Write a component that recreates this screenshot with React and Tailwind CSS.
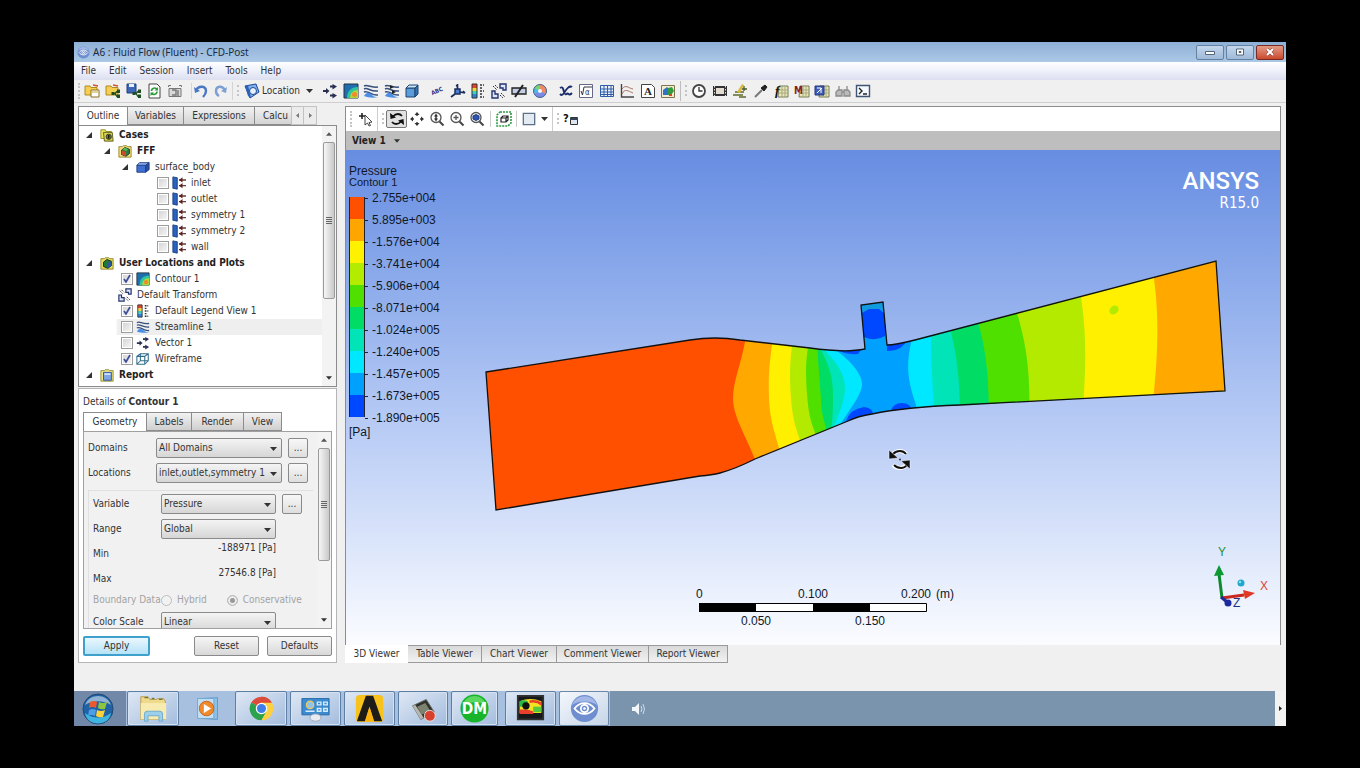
import { useState } from 'react';

/* ---------- small shared pieces ---------- */

function Svg({ children, className = 'size-4', box = '0 0 16 16' }) {
  return (
    <svg viewBox={box} className={`${className} shrink-0`} fill="none" aria-hidden="true">
      {children}
    </svg>
  );
}

const Caret = ({ className = 'w-[7px] h-1' }) => (
  <Svg box="0 0 7 4" className={className}>
    <path d="M0 0h7L3.500 4z" fill="#333" />
  </Svg>
);

const Grip = () => (
  <span className="h-4 w-0.5 border-l-2 border-dotted border-[#c4c4c8]"></span>
);

/* ---------- toolbar icons ---------- */

const folder = <path d="M1 3h5l1 1.500h6V12H1z" fill="#f5cf52" stroke="#b08a20" />;
const share = (
  <>
    <path d="M7 10.500h3l2-2h1M10 10.500l2 3h1" stroke="#1e4d22" strokeWidth="1.300" />
    <path d="M12 6.500h3v3.500h-3zM12 11.500h3V15h-3zM6.500 9h3v3h-3z" fill="#1e4d22" />
  </>
);
const sheet = (
  <>
    <path d="M6 3h9v11H5z" fill="#e9e7b8" stroke="#777a55" />
    <path d="M6 7h9M6 10h9M9 4v10M12 4v10" stroke="#a6a880" />
  </>
);
const lens = (
  <>
    <circle cx="7" cy="6.500" r="5" fill="#fff" stroke="#555" strokeWidth="1.300" />
    <path d="M10.500 10.500l4 4" stroke="#444" strokeWidth="2" />
  </>
);
const waves = (
  <>
    <path d="M1 3c4-2 5 2 14 1M1 6c4-2 6 3 14 2M1 9c5-2 7 4 14 3" stroke="#36507c" strokeWidth="1.500" />
    <path d="M1 13c3-5 6-3 8-1s4 2 6 2c-4 1-9 1-14-1z" fill="#4b8ee6" />
  </>
);
const legendIcon = (
  <>
    <path d="M2 1h5v4H2z" fill="#e8432a" />
    <path d="M2 5h5v3H2z" fill="#f0d43c" />
    <path d="M2 8h5v3H2z" fill="#3fd0c0" />
    <path d="M2 11h5v4H2z" fill="#2b86d8" />
    <path d="M2 1h5v14H2z" stroke="#333" />
    <path d="M10 2h4M10 5h3M10 8h4M10 11h3M10 14h4" stroke="#333" strokeWidth="1.500" strokeDasharray="2 1" />
  </>
);
const contourIcon = (
  <>
    <path d="M1 1h14v14H1z" fill="#1f6fae" stroke="#234" />
    <path d="M4 15C4 8 8 4 15 4v11z" fill="#2fc3a0" />
    <path d="M7 15c0-5 3-8 8-8v8z" fill="#a9dc3a" />
    <circle cx="11.500" cy="11.500" r="2.500" fill="#f08a2c" />
  </>
);
const transformIcon = (
  <>
    <path d="M9 1h6v6h-3V5H9zM1 8h3v3h3v4H1z" fill="#dfe6fb" stroke="#26356e" strokeWidth="1.400" />
    <path d="M2 3l4 4M10 10l4 4M4 2l3 3M9 12l3 3" stroke="#333" strokeDasharray="2 1" />
  </>
);
const vectorIcon = (
  <>
    <path d="M1 8h4M8 3.500h3M8 12.500h3" stroke="#2a2f52" strokeWidth="2" />
    <path d="M4 5l3.500 3L4 11zM10.500 1l4.500 2.500L10.500 6.500zM10.500 10l4.500 2.500-4.500 3z" fill="#2a2f52" />
  </>
);
const cubeIcon = (
  <>
    <path d="M2 5h9v9H2z" fill="#5b9ddb" stroke="#1f446e" />
    <path d="M2 5l3-3h9l-3 3z" fill="#c7e2f8" stroke="#1f446e" />
    <path d="M14 2v9l-3 3V5z" fill="#3572ad" stroke="#1f446e" />
  </>
);
const wireIcon = (
  <path d="M1 5h9v9H1zM5 2h9v8H5zM1 5l4-3M10 5l4-3M10 14l4-4M1 14l4-4" stroke="#2f6d8c" strokeWidth="1.200" />
);
const rotateIcon = (
  <>
    <path d="M4 5.500C7 2 11 2.500 13 5M12 10.500C9 14 5 13.500 3 11" stroke="#111" strokeWidth="1.800" />
    <path d="M1 2l.5 6L7 6.500zM15 14l-.5-6L9 9.500z" fill="#111" />
  </>
);

const fileIcons = {
  'Load results': <>{folder}<path d="M7 7h8v7H7z" fill="#fff" stroke="#8a7020" /><path d="M9 2l5 1" stroke="#d0532b" strokeWidth="1.500" /><path d="M8 9h6" stroke="#c9a437" /></>,
  'Load state': <>{folder}{share}<path d="M8 2l5 1" stroke="#d0532b" strokeWidth="1.500" /></>,
  'Save state': <><path d="M1 1h9v9H1z" fill="#3d66b8" stroke="#243f7a" /><path d="M3 1h5v3H3z" fill="#e8eefb" />{share}</>,
  Refresh: <><path d="M3 1h8l3 3v11H3z" fill="#fff" stroke="#444" /><path d="M5.500 8c0-3 4-4 5.500-1.500M11 8.500c0 3-4 4-5.500 1.500" stroke="#2c9a3a" strokeWidth="1.600" /><path d="M12 4v3.500H8.500zM4.500 13V9.500H8z" fill="#2c9a3a" /></>,
  Snapshot: <><path d="M1.500 4V2.500H4M12 2.500h2.500V4M2 5.500h12v8H2z" fill="#d9d9d9" stroke="#777" /><path d="M5 7h4v5H5M11 7v6" stroke="#777" strokeWidth="1.400" /></>,
};

const undoIcons = {
  Undo: <><path d="M3 7c3-5 10-4 10 1 0 2-1 4-3 6" stroke="#4a77c4" strokeWidth="2.400" /><path d="M1 4l1 6 5-2z" fill="#4a77c4" /></>,
  Redo: <><path d="M13 7C10 2 4 3 4 8c0 2 1 4 3 5" stroke="#7c9fd4" strokeWidth="2.400" /><path d="M15 4l-1 6-5-2z" fill="#7c9fd4" /></>,
};

const plotIcons = {
  Vector: vectorIcon,
  Contour: contourIcon,
  Streamline: waves,
  'Particle track': <>{waves}<path d="M6 2l4 2-4 2zM8 7l4 2-4 2z" fill="#222" /></>,
  Volume: cubeIcon,
};

const insertIcons = {
  Text: <text x="8" y="10" fontSize="6" fontWeight="700" textAnchor="middle" fill="#2c2f86" transform="rotate(-24 8 8)">ABC</text>,
  'Coordinate frame': <><path d="M5 6h5v5H5z" fill="#4a7fd0" stroke="#1d2c5c" strokeWidth="1.500" /><path d="M7.500 6V1M10 9l5 1M5 11l-4 3M8 2l-2 1M13 8l2 2" stroke="#1d2c5c" strokeWidth="1.700" /></>,
  Legend: legendIcon,
  Transform: transformIcon,
  'Clip plane': <><path d="M1 5h14v6H1z" fill="#c3cde6" stroke="#222" strokeWidth="1.300" /><path d="M4 14L12 2" stroke="#222" strokeWidth="2" /></>,
  'Color map': <><circle cx="8" cy="8" r="6.500" fill="#4cb9e8" /><path d="M8 8V1.500A6.500 6.500 0 0 1 13.600 11z" fill="#ef8a62" /><path d="M8 8l5.600 3.200A6.500 6.500 0 0 1 2.400 11z" fill="#7a8ae6" /><path d="M8 8V1.500A6.500 6.500 0 0 0 2.400 5z" fill="#74d672" /><circle cx="8" cy="8" r="2" fill="#f3f6fb" /><circle cx="8" cy="8" r="6.500" stroke="#49618a" /></>,
};

const calcIcons = {
  Variable: <path d="M2 5c3-2 3 1 4 4s2 3 4 1M13 4C10 3 8 7 6 10s-3 2-4 1M10 5c1-2 3-2 4-1M10 10c1 3 3 1 4 0" stroke="#1d2f6b" strokeWidth="1.900" />,
  Expression: <><path d="M1.500 1.500h13v13h-13z" fill="#fff" stroke="#668" /><path d="M3 8l1.500 4L6 4h8" stroke="#334" /><text x="7" y="12" fontSize="8" fill="#334">α</text></>,
  Table: <><path d="M1.500 2.500h13v11h-13z" fill="#e9f0fb" stroke="#2e5ca8" /><path d="M1 6h14M1 9h14M1 11.500h14M5 2v12M8.500 2v12M12 2v12" stroke="#2e5ca8" /></>,
  Chart: <><path d="M2.500 1v13H15" stroke="#444" strokeWidth="1.400" /><path d="M3 6c4-5 6-1 11 0M3 11c3-6 6-3 11-1" stroke="#a87360" /></>,
  Comment: <><path d="M1.500 1.500h10l3 3v10h-13z" fill="#fff" stroke="#444" /><text x="8" y="12" fontSize="11" fontWeight="700" textAnchor="middle" fill="#222" className="font-['Liberation_Serif',serif]">A</text></>,
  Figure: <><path d="M1.500 2.500h13v12h-13z" fill="#f4ecd0" stroke="#7b744c" /><path d="M3 7l4-3 2 2v6H3z" fill="#2f73c9" /><path d="M8 5l4-1 2 4-3 4H8z" fill="#2f9d3c" /><path d="M9 11h3v2H9z" fill="#d04a2a" /></>,
};

const toolIcons = {
  Timestep: <><circle cx="8" cy="8" r="6" fill="#fff" stroke="#444" strokeWidth="1.800" /><path d="M8 4v4h3.500" stroke="#333" strokeWidth="1.300" /></>,
  Animation: <><path d="M1 3h14v10H1z" fill="#333" /><path d="M4 5h8v6H4z" fill="#e2ddd0" /><path d="M2.500 3v10M13.500 3v10" stroke="#ddd" strokeDasharray="1.500 1.500" /></>,
  'Quick editor': <><path d="M1 12h10M3 9h9M7 14h7" stroke="#5d6b2f" strokeWidth="1.500" /><path d="M5 9l5-8 2 1-4 8z" fill="#d8b83e" /><path d="M10 6h5M12 3v5" stroke="#4c5a2a" strokeWidth="1.300" /></>,
  Probe: <><path d="M2 14l7-7" stroke="#777" strokeWidth="2" /><path d="M8 5l3 3 3-4-2-2z" fill="#222" stroke="#222" /></>,
  'Function calculator': <>{sheet}<text x="2" y="12" fontSize="13" fontWeight="700" fontStyle="italic" fill="#111" className="font-['Liberation_Serif',serif]">f</text></>,
  'Macro calculator': <>{sheet}<text x="0" y="11" fontSize="10" fontWeight="700" fill="#8a1f22">M</text></>,
  'Mesh calculator': <>{sheet}<path d="M1 3h9v9H1z" fill="#3f5fb8" stroke="#22367a" /><path d="M3 10l5-5M3 5h4v5" stroke="#fff" /></>,
  'Case comparison': <path d="M3 7h4v6H1V9zM9 7h4l2 2v4H9zM4 3v4M12 3v4M7 9h2" fill="#bbb" stroke="#8b8b8b" strokeWidth="1.300" />,
  'Command editor': <><path d="M1.500 2.500h13v11h-13z" fill="#f5f8fc" stroke="#3f5570" strokeWidth="1.400" /><path d="M4 5l3 3-3 3M8 11h4" stroke="#222" strokeWidth="1.400" /></>,
};

function IconGroup({ icons, className }) {
  return (
    <div className={`flex items-center justify-between ${className}`}>
      {Object.entries(icons).map(([name, art]) => (
        <button key={name} aria-label={name} title={name}>
          <Svg>{art}</Svg>
        </button>
      ))}
    </div>
  );
}

/* ---------- window chrome ---------- */

function EyeLogo({ className }) {
  return (
    <Svg box="0 0 32 32" className={className}>
      <circle cx="16" cy="16" r="15" fill="#6e8ed0" />
      <path d="M2 12a15 15 0 0 1 28 0c-8-5-20-5-28 0z" fill="#a3b8e6" />
      <path d="M5 16c6-8 16-8 22 0-6 8-16 8-22 0z" stroke="#fff" strokeWidth="2" />
      <circle cx="16" cy="16" r="4" stroke="#fff" strokeWidth="2" />
      <circle cx="16" cy="16" r="1.500" fill="#fff" />
    </Svg>
  );
}

function TitleBar() {
  return (
    <header className="flex h-5 items-center bg-linear-to-b from-[#8fb0d6] to-[#abc8e6] pl-[3px] pr-0.5">
      <EyeLogo className="size-[13px]" />
      <h1 className="ml-[3px] flex-1 font-['Noto_Sans',sans-serif] text-[10px] text-[#1b2b40]">A6 : Fluid Flow (Fluent) - CFD-Post</h1>
      <div className="flex gap-0.5">
        <button aria-label="Minimize" className="flex h-[15px] w-7 items-center justify-center rounded-xs border border-[#6580a0] bg-linear-to-b from-[#c3d6ec] to-[#9fbad8]">
          <Svg box="0 0 12 8" className="h-2 w-3"><path d="M1.500 3.500h9v3h-9z" fill="#fff" stroke="#55657a" /></Svg>
        </button>
        <button aria-label="Maximize" className="flex h-[15px] w-7 items-center justify-center rounded-xs border border-[#6580a0] bg-linear-to-b from-[#c3d6ec] to-[#9fbad8]">
          <Svg box="0 0 12 8" className="h-2 w-3"><path d="M2.500 1h7v6h-7z" fill="#fff" stroke="#55657a" /><path d="M5 3.500h2v1H5z" stroke="#55657a" /></Svg>
        </button>
        <button aria-label="Close" className="flex h-[15px] w-7 items-center justify-center rounded-xs border border-[#7a2a20] bg-linear-to-b from-[#e39a85] to-[#c9482c]">
          <Svg box="0 0 12 8" className="h-2 w-3"><path d="M3 1l6 6M9 1L3 7" stroke="#733" strokeWidth="3" /><path d="M3 1l6 6M9 1L3 7" stroke="#fff" strokeWidth="2" /></Svg>
        </button>
      </div>
    </header>
  );
}

function MenuBar() {
  return (
    <nav className="flex h-[18px] items-center gap-[13px] bg-linear-to-b from-white via-[#eef0fa] to-[#dcdff0] pl-[7px]">
      {['File', 'Edit', 'Session', 'Insert', 'Tools', 'Help'].map((item) => (
        <button key={item}>{item}</button>
      ))}
    </nav>
  );
}

function Toolbar() {
  return (
    <div className="flex h-[23px] items-center border-b border-[#cfcfd2] pl-1">
      <Grip />
      <IconGroup icons={fileIcons} className="ml-1 w-[99px]" />
      <IconGroup icons={undoIcons} className="ml-2 w-[37px] border-l border-[#d4d4d8] pl-px" />
      <span className="ml-1 h-[18px] border-l border-[#d4d4d8]"></span>
      <span className="ml-1"><Grip /></span>
      <button className="ml-[5px] flex items-center gap-0.5">
        <Svg>
          <path d="M1 3l11-2 3 8-9 6z" fill="#7fb2ee" stroke="#1c4694" />
          <path d="M1 3l3-1 3 13-3-2z" fill="#2b62b6" />
          <circle cx="9" cy="8" r="3.500" fill="#e7f1fd" stroke="#1c4694" />
        </Svg>
        Location
        <Caret className="ml-1 h-1 w-[7px]" />
      </button>
      <IconGroup icons={plotIcons} className="ml-[9px] w-[98px]" />
      <IconGroup icons={insertIcons} className="ml-[9px] w-[119px]" />
      <IconGroup icons={calcIcons} className="ml-[10px] w-[118px]" />
      <span className="ml-1 h-5 border-l border-[#bdbdc0]"></span>
      <span className="ml-1"><Grip /></span>
      <IconGroup icons={toolIcons} className="ml-1 w-[180px]" />
    </div>
  );
}

/* ---------- outline tree ---------- */

const arrowPlate = (
  <>
    <path d="M1 1l5 1v13l-5-1z" fill="#2a62c0" stroke="#173a7c" />
    <path d="M8 4.500h8M8 11h8" stroke="#6b3a3a" strokeWidth="1.600" />
    <path d="M8 4.500l4-3v6zM8 11l4-3v6z" fill="#5a2222" />
  </>
);
const casesIcon = (
  <>
    <path d="M1 2h5l1 2h6v8H1z" fill="#eee45a" stroke="#8f8a1e" />
    <path d="M4 5h10l1 10H5z" fill="#d8d44c" stroke="#55551a" />
    <circle cx="10" cy="10" r="3" fill="#6b7a20" stroke="#333" />
    <path d="M10 8v4" stroke="#111" strokeWidth="1.500" />
  </>
);
const fffIcon = (
  <>
    <path d="M1 3h4l1-1h4l1 1h4v12H1z" fill="#f1e07a" stroke="#95802b" />
    <path d="M4 7l4-3 5 2v5l-4 3-5-2z" fill="#2e7d3a" stroke="#223" />
    <path d="M4 7l5 2v5l-5-2z" fill="#cc4a30" />
    <path d="M5 6l3-2 4 2-3 2z" fill="#53b555" />
  </>
);
const plotsIcon = (
  <>
    <path d="M1 3h4l1-1h4l1 1h4v12H1z" fill="#e8dc5c" stroke="#8b852a" />
    <path d="M4 7l4-3 5 2v5l-4 3-5-2z" fill="#1f7a34" stroke="#122" />
    <path d="M9 8l4-2v5l-4 3z" fill="#2b55a0" />
  </>
);
const reportIcon = (
  <>
    <path d="M1 3h4l1-1h4l1 1h4v12H1z" fill="#efe98a" stroke="#8b852a" />
    <path d="M4 5h9v9H4z" fill="#7ea6e6" stroke="#2a4c96" />
    <path d="M5 6h7v2H5z" fill="#d2e1fa" />
  </>
);
const bodyIcon = (
  <>
    <path d="M1 6h10v8H1z" fill="#3f6fd0" stroke="#1f3c86" />
    <path d="M1 6l3-3h11l-4 3z" fill="#8db0f0" stroke="#1f3c86" />
    <path d="M15 3v8l-4 3V6z" fill="#274f9f" stroke="#1f3c86" />
  </>
);

const tree = [
  { label: 'Cases', icon: casesIcon, pad: 'pl-[7px]', open: true, bold: true },
  { label: 'FFF', icon: fffIcon, pad: 'pl-[25px]', open: true, bold: true },
  { label: 'surface_body', icon: bodyIcon, pad: 'pl-[43px]', open: true },
  { label: 'inlet', icon: arrowPlate, pad: 'pl-[78px]', check: 'off' },
  { label: 'outlet', icon: arrowPlate, pad: 'pl-[78px]', check: 'off' },
  { label: 'symmetry 1', icon: arrowPlate, pad: 'pl-[78px]', check: 'off' },
  { label: 'symmetry 2', icon: arrowPlate, pad: 'pl-[78px]', check: 'off' },
  { label: 'wall', icon: arrowPlate, pad: 'pl-[78px]', check: 'off' },
  { label: 'User Locations and Plots', icon: plotsIcon, pad: 'pl-[7px]', open: true, bold: true },
  { label: 'Contour 1', icon: contourIcon, pad: 'pl-[42px]', check: 'on' },
  { label: 'Default Transform', icon: transformIcon, pad: 'pl-[39px]' },
  { label: 'Default Legend View 1', icon: legendIcon, pad: 'pl-[42px]', check: 'on' },
  { label: 'Streamline 1', icon: waves, pad: 'pl-[42px]', check: 'off', active: true },
  { label: 'Vector 1', icon: vectorIcon, pad: 'pl-[42px]', check: 'off' },
  { label: 'Wireframe', icon: wireIcon, pad: 'pl-[42px]', check: 'on' },
  { label: 'Report', icon: reportIcon, pad: 'pl-[7px]', open: true, bold: true },
];

function TreeRow({ row }) {
  const Row = row.check ? 'label' : 'div';
  return (
    <li className={row.active ? 'bg-linear-to-r from-white from-15% to-[#efefef] to-16%' : ''}>
      <Row className={`flex h-4 items-center ${row.pad}`}>
        {row.open && (
          <button aria-label={`Collapse ${row.label}`} className="mr-2">
            <Svg box="0 0 6 6" className="size-[6px]"><path d="M6 0v6H0z" fill="#333" /></Svg>
          </button>
        )}
        {row.check && (
          <span className="relative mr-[3px] flex">
            <input
              type="checkbox"
              defaultChecked={row.check === 'on'}
              className="peer size-3 appearance-none border border-[#9c9c9c] bg-linear-to-br from-[#d2d2d2] to-[#f8f8f8] shadow-[inset_0_0_0_1px_#fff]"
            />
            <svg viewBox="0 0 12 12" className="pointer-events-none absolute inset-0 hidden size-3 peer-checked:block" fill="none">
              <path d="M3 6l2 3 4-7" stroke="#3f4f96" strokeWidth="1.700" />
            </svg>
          </span>
        )}
        <Svg className="size-[14px]">{row.icon}</Svg>
        <span className={`ml-[5px] whitespace-nowrap ${row.bold ? 'font-bold text-[#222]' : ''}`}>{row.label}</span>
      </Row>
    </li>
  );
}

function ScrollBar({ thumb }) {
  return (
    <div className="flex w-[14px] shrink-0 flex-col items-center bg-[#f3f3f3]">
      <button aria-label="Scroll up" className="flex h-4 w-full items-center justify-center">
        <Svg box="0 0 7 4" className="h-1 w-[6px]"><path d="M0 4h7L3.500 0z" fill="#555" /></Svg>
      </button>
      <div className={`flex w-3 flex-col items-center justify-center gap-px rounded-xs border border-[#9a9a9a] bg-linear-to-r from-[#f6f6f6] to-[#c9c9cb] ${thumb}`}>
        <span className="h-px w-1.5 bg-[#666]"></span>
        <span className="h-px w-1.5 bg-[#666]"></span>
        <span className="h-px w-1.5 bg-[#666]"></span>
        <span className="h-px w-1.5 bg-[#666]"></span>
      </div>
      <button aria-label="Scroll down" className="mt-auto flex h-4 w-full items-center justify-center">
        <Caret className="h-1 w-[6px]" />
      </button>
    </div>
  );
}

function Outline() {
  return (
    <section className="shrink-0">
      <div className="flex h-[19px] items-stretch">
        <button className="w-[50px] border border-b-0 border-[#8c8c8c] bg-white">Outline</button>
        <button className="w-14 border border-l-0 border-[#8c8c8c] bg-linear-to-b from-[#f2f2f2] to-[#d4d4d4]">Variables</button>
        <button className="w-[71px] border border-l-0 border-[#8c8c8c] bg-linear-to-b from-[#f2f2f2] to-[#d4d4d4]">Expressions</button>
        <button className="w-[36px] overflow-hidden border border-x-0 border-[#8c8c8c] bg-linear-to-b from-[#f2f2f2] to-[#d4d4d4] pl-2 text-left">Calcu</button>
        <button aria-label="Previous tabs" className="flex w-[13px] items-center justify-center border border-[#c2c2c2] bg-[#ececec]">
          <Svg box="0 0 3 5" className="h-[5px] w-[3px]"><path d="M3 0v5L0 2.500z" fill="#777" /></Svg>
        </button>
        <button aria-label="Next tabs" className="flex w-[13px] items-center justify-center border border-l-0 border-[#c2c2c2] bg-[#ececec]">
          <Svg box="0 0 3 5" className="h-[5px] w-[3px]"><path d="M0 0v5L3 2.500z" fill="#777" /></Svg>
        </button>
      </div>
      <div className="flex h-[262px] border border-[#8c8c8c] bg-white">
        <ul className="flex-1 overflow-hidden pt-px">
          {tree.map((row) => (
            <TreeRow key={row.label} row={row} />
          ))}
        </ul>
        <ScrollBar thumb="h-[157px]" />
      </div>
    </section>
  );
}

/* ---------- details editor ---------- */

function Combo({ id, value, width, more }) {
  return (
    <>
      <span className={`relative ${width}`}>
        <select
          id={id}
          className="h-5 w-full appearance-none overflow-hidden rounded-xs border border-[#8a8a8a] bg-linear-to-b from-[#f4f4f4] to-[#d6d6d6] pl-[2px] pr-[16px]"
        >
          <option>{value}</option>
        </select>
        <span className="pointer-events-none absolute right-[5px] top-[9px]"><Caret /></span>
      </span>
      {more && (
        <button aria-label={`Edit ${id}`} className="ml-[6px] h-5 w-5 rounded-xs border border-[#8a8a8a] bg-linear-to-b from-[#f8f8f8] to-[#dedede]">
          ...
        </button>
      )}
    </>
  );
}

function Details() {
  const [mode, setMode] = useState('Conservative');

  return (
    <section className="flex flex-1 flex-col border border-[#b5b5b8] bg-white px-1 pb-[6px]">
      <h2 className="mt-[3px] flex h-5 items-center">
        <span>Details of <b>Contour 1</b></span>
      </h2>
      <div className="flex h-[19px]">
        <button className="w-16 border border-b-0 border-[#8c8c8c] bg-white">Geometry</button>
        {['Labels', 'Render', 'View'].map((tab, i) => (
          <button
            key={tab}
            className={`border border-l-0 border-[#8c8c8c] bg-linear-to-b from-[#f2f2f2] to-[#cfcfcf] ${['w-[45px]', 'w-[52px]', 'w-[38px]'][i]}`}
          >
            {tab}
          </button>
        ))}
      </div>
      <div className="flex h-[198px] border border-[#a0a0a0] bg-[#f1f1f2]">
        <form className="flex-1 overflow-hidden pl-[4px] pt-[3px]">
          <div className="flex h-[25px] items-center">
            <label htmlFor="Domains" className="w-[68px]">Domains</label>
            <Combo id="Domains" value="All Domains" width="w-[126px]" more />
          </div>
          <div className="flex h-[25px] items-center">
            <label htmlFor="Locations" className="w-[68px]">Locations</label>
            <Combo id="Locations" value="inlet,outlet,symmetry 1,symmetry 2,wall" width="w-[126px]" more />
          </div>
          <div className="mr-1 mt-[5px] border-l border-t border-[#e0e0e3] pl-1">
            <div className="flex h-[25px] items-center">
              <label htmlFor="Variable" className="w-[68px]">Variable</label>
              <Combo id="Variable" value="Pressure" width="w-[115px]" more />
            </div>
            <div className="flex h-[25px] items-center">
              <label htmlFor="Range" className="w-[68px]">Range</label>
              <Combo id="Range" value="Global" width="w-[115px]" />
            </div>
            <div className="flex h-[25px] w-[183px] justify-between pt-px">
              <span className="self-center">Min</span>
              <span>-188971 [Pa]</span>
            </div>
            <div className="flex h-[25px] w-[183px] justify-between pt-px">
              <span className="self-center">Max</span>
              <span>27546.8 [Pa]</span>
            </div>
            <fieldset className="flex h-[18px] items-center whitespace-nowrap text-[#a3a3a3]">
              <span className="w-[68px]">Boundary Data</span>
              {['Hybrid', 'Conservative'].map((name) => (
                <label key={name} className="mr-5 flex items-center gap-[5px] last:mr-0">
                  <input
                    type="radio"
                    name="boundary"
                    checked={mode === name}
                    onChange={() => setMode(name)}
                    className="size-[11px] appearance-none rounded-full border border-[#bdbdbd] bg-[#f2f2f2] checked:bg-[#999] checked:shadow-[inset_0_0_0_2px_#eee]"
                  />
                  {name}
                </label>
              ))}
            </fieldset>
            <div className="flex h-[25px] items-center">
              <label htmlFor="ColorScale" className="w-[68px]">Color Scale</label>
              <Combo id="ColorScale" value="Linear" width="w-[115px]" />
            </div>
          </div>
        </form>
        <ScrollBar thumb="h-[113px]" />
      </div>
      <div className="mt-auto flex justify-between">
        <button className="h-5 w-[67px] rounded-xs border-2 border-[#3fa0cc] bg-linear-to-b from-[#eaf7fe] to-[#b5e2f7]">Apply</button>
        <div className="flex gap-2">
          <button className="h-5 w-[65px] rounded-xs border border-[#8a8a8a] bg-linear-to-b from-[#f6f6f6] to-[#d8d8d8]">Reset</button>
          <button className="h-5 w-[65px] rounded-xs border border-[#8a8a8a] bg-linear-to-b from-[#f6f6f6] to-[#d8d8d8]">Defaults</button>
        </div>
      </div>
    </section>
  );
}

/* ---------- viewer ---------- */

const legend = [
  ['2.755e+004', 'bg-[#ff5000]'],
  ['5.895e+003', 'bg-[#ffa500]'],
  ['-1.576e+004', 'bg-[#fff200]'],
  ['-3.741e+004', 'bg-[#b4ec00]'],
  ['-5.906e+004', 'bg-[#50e000]'],
  ['-8.071e+004', 'bg-[#00dc64]'],
  ['-1.024e+005', 'bg-[#00e4b8]'],
  ['-1.240e+005', 'bg-[#00e8ff]'],
  ['-1.457e+005', 'bg-[#00a0ff]'],
  ['-1.673e+005', 'bg-[#0048ff]'],
  ['-1.890e+005', ''],
];

function Legend() {
  return (
    <div className="relative pl-[3px] pt-[15px] text-xs leading-[12px] text-[#101828]">
      <p>Pressure</p>
      <p className="text-[11px] leading-[10px]">Contour 1</p>
      <div className="flex">
        <div className="mt-[10px] w-4">
          <div className="border-x border-[#223]">
            {legend.slice(0, 10).map(([value, color]) => (
              <div key={value} className={`h-[22px] ${color}`}></div>
            ))}
          </div>
          <p className="mt-[9px]">[Pa]</p>
        </div>
        <ul>
          {legend.map(([value]) => (
            <li key={value} className="flex h-[22px] items-center">
              <span className="mr-1 h-px w-[3px] bg-[#223]"></span>
              {value}
            </li>
          ))}
        </ul>
      </div>
    </div>
  );
}

const outlinePath =
  'M486 372L690 340Q715 336 740 340L810 348Q845 353 865 349L861 305 883 302 887 345Q895 345 915 340L1216 261 1225 391 960 405Q905 407 872 414 858 416 848 421L755 459Q735 469 720 473 712 475 700 476L496 510Z';

// every band covers all that lies right of its left edge
const bands = [
  ['#ffa800', 'M747 330C743 360 733 380 733 398S745 434 757 464H1300V200Z'],
  ['#fff000', 'M774 330C770 360 768 372 769 398S776 434 782 460H1300V200Z'],
  ['#b4ea00', 'M794 330C790 360 789 372 791 398S797 430 803 450H1300V200Z'],
  ['#50e000', 'M811 330C806 356 805 368 807 394S812 424 818 440H1300V200Z'],
  ['#00dc64', 'M817 340C818 365 820 380 821 400S825 420 829 440H1300V200Z'],
  ['#00e4b8', 'M818 345C830 365 833 378 833 396S832 420 831 440H1300V200Z'],
  ['#00e8ff', 'M820 346C836 360 845 374 845 388S838 415 829 440H1300V200Z'],
  ['#00a0ff', 'M832 348C850 359 862 374 862 384S852 406 840 425L870 440H1300V200H850Z'],
  ['#00e8ff', 'M914 330C909 350 906 365 910 384S917 402 919 420H1300V200Z'],
  ['#00e4b8', 'M931 330C931 360 932 380 935 420H1300V200Z'],
  ['#00dc64', 'M948 320C956 350 960 375 960 420H1300V200Z'],
  ['#50e000', 'M976 315C985 345 989 370 989 420H1300V200Z'],
  ['#b4ea00', 'M1013 300C1026 340 1031 370 1029 420H1300V200Z'],
  ['#fff000', 'M1078 280C1088 330 1086 370 1082 420H1300V200Z'],
  ['#ffa800', 'M1151 260C1160 310 1159 350 1151 420H1300V200Z'],
];

function Contour() {
  return (
    <svg viewBox="346 150 934 495" className="absolute inset-0 h-full w-full" role="img" aria-label="Pressure contour">
      <clipPath id="domain">
        <path d={outlinePath} />
      </clipPath>
      <g clipPath="url(#domain)">
        <path d="M480 250h800v270H480z" fill="#ff5000" />
        {bands.map(([fill, d], i) => (
          <path key={i} d={d} fill={fill} />
        ))}
        <path d="M858 298h27l3 45-23 5z" fill="#00a0ff" />
        <path d="M860 300h24l1 11-23 2z" fill="#129ade" />
        <path d="M862 313l7-4 10 0 6 5v22q-10 6-21 1z" fill="#0048ff" />
        <path d="M836 349q8 6 22 5l5-7zM887 342v9q14 1 21-12zM846 421q4-12 18-14 10 1 9 9zM891 411q2-8 11-8 8 0 10 7z" fill="#0048ff" />
        <ellipse cx="1114" cy="310" rx="5" ry="4" fill="#b4ea00" transform="rotate(-40 1114 310)" />
      </g>
      <path d={outlinePath} fill="none" stroke="#111" strokeWidth="1.300" />
      {/* rotate cursor */}
      <g fill="none" stroke="#fff" strokeWidth="4">
        <path d="M893 454c4-4 10-4 13 0M906 465c-3 4-9 4-13 0" />
      </g>
      <path d="M893 454c4-4 10-4 13 0M907 465c-3 4-9 4-13 0" fill="none" stroke="#111" strokeWidth="2" />
      <path d="M889 450v9l9-1zM910 469v-9l-9 1z" fill="#111" stroke="#fff" strokeWidth=".5" />
      <circle cx="900" cy="459.500" r="1" fill="#334" />
    </svg>
  );
}

function Ruler() {
  return (
    <svg viewBox="0 0 270 44" className="absolute bottom-[15px] left-[37.500%] h-11 w-[270px] font-['Liberation_Sans',Arial,sans-serif] text-xs" fill="#101828">
      <text x="0" y="12">0</text>
      <text x="117" y="12" textAnchor="middle">0.100</text>
      <text x="205" y="12">0.200</text>
      <text x="240" y="12">(m)</text>
      <path d="M3.500 17.500h227v8h-227z" fill="#fff" stroke="#000" />
      <path d="M3 17h57v9H3zM117 17h57v9h-57z" fill="#000" />
      <text x="60" y="39" textAnchor="middle">0.050</text>
      <text x="174" y="39" textAnchor="middle">0.150</text>
    </svg>
  );
}

function Triad() {
  return (
    <svg viewBox="0 -6 60 72" className="absolute bottom-[31px] right-2 h-[72px] w-[60px] font-['Liberation_Sans',Arial,sans-serif] text-xs">
      <path d="M10 50L7 26" stroke="#0c8a2c" strokeWidth="3" />
      <path d="M2 28l5-11 5 10z" fill="#0c9a30" />
      <path d="M10 50l22-3" stroke="#c8281e" strokeWidth="3" />
      <path d="M31 42l12 3-10 6z" fill="#e03a26" />
      <path d="M9 49l6 5" stroke="#1f2c9c" strokeWidth="3" />
      <circle cx="16" cy="55" r="3.500" fill="#1b2a9e" />
      <circle cx="29" cy="35" r="3.500" fill="#21a7c8" />
      <circle cx="28" cy="34" r="1.200" fill="#8be4f2" />
      <text x="6" y="8" fill="#1c8f3c">Y</text>
      <text x="48" y="42" fill="#e0453a">X</text>
      <text x="21" y="59" fill="#23308a">Z</text>
    </svg>
  );
}

function ViewerToolbar() {
  return (
    <div className="flex h-6 items-center bg-white pl-1">
      <Grip />
      <button aria-label="Select" className="ml-[6px] flex">
        <Svg><path d="M1 5h6M4 2v6" stroke="#222" strokeWidth="1.600" /><path d="M7 4l7 7-3 .5 1.500 3-1.500.5L9.500 12 7 14z" fill="#fff" stroke="#444" /></Svg>
      </button>
      <span className="ml-[3px] h-6 border-l border-[#ccc]"></span>
      <span className="ml-1"><Grip /></span>
      <button aria-label="Rotate" className="ml-[2px] flex h-[18px] w-[21px] items-center justify-center rounded-xs border border-[#777] bg-[#e2e2e2]">
        <Svg>{rotateIcon}</Svg>
      </button>
      <div className="ml-[2px] flex w-[76px] justify-between">
        <button aria-label="Pan"><Svg><path d="M8 2v3M8 11v3M2 8h3M11 8h3" stroke="#444" strokeWidth="1.500" /><path d="M8 1l2.500 3h-5zM8 15l2.500-3h-5zM1 8l3-2.500v5zM15 8l-3-2.500v5z" fill="#333" /></Svg></button>
        <button aria-label="Zoom"><Svg>{lens}<path d="M7 2.500l2 3H5zM7 10.500l2-3H5z" fill="#333" /><path d="M7 4v5" stroke="#333" strokeWidth="1.500" /></Svg></button>
        <button aria-label="Zoom box"><Svg>{lens}<path d="M7 4v5M4.500 6.500h5" stroke="#555" strokeWidth="1.300" /></Svg></button>
        <button aria-label="Fit view"><Svg>{lens}<path d="M4 5l3-1.500L10 5v3L7 9.500 4 8z" fill="#2d55b4" stroke="#1c357a" /></Svg></button>
      </div>
      <span className="ml-[5px] h-4 border-l border-[#ccc]"></span>
      <button aria-label="Highlight" className="ml-[5px]">
        <Svg><path d="M4 1h11v11l-3 3H1V4z" stroke="#2e9a46" strokeWidth="1.600" strokeDasharray="2 1" /><path d="M5 7l2-2h5v4l-2 2H5zM5 7h5v4M10 7l2-2" stroke="#222" strokeWidth="1.200" /></Svg>
      </button>
      <span className="ml-[4px] h-4 border-l border-[#ccc]"></span>
      <button aria-label="Viewport layout" className="ml-[5px] flex items-center gap-[5px]">
        <Svg className="size-[14px]"><path d="M1.500 1.500h13v13h-13z" fill="#e4eaf2" stroke="#5d7188" strokeWidth="1.500" /></Svg>
        <Caret />
      </button>
      <span className="ml-1 h-6 border-l border-[#ccc]"></span>
      <span className="ml-1"><Grip /></span>
      <button aria-label="View help" className="ml-1 flex items-center">
        <Svg><text x="0" y="11" fontSize="11" fontWeight="700" fill="#111">?</text><path d="M7.500 6.500h7v7h-7z" fill="#dde5f0" stroke="#333" /><path d="M7 8h8" stroke="#345" strokeWidth="2" /></Svg>
      </button>
    </div>
  );
}

function Viewer() {
  const [tab, setTab] = useState('3D Viewer');
  const tabs = [
    ['3D Viewer', 'w-[63px]'],
    ['Table Viewer', 'w-[74px]'],
    ['Chart Viewer', 'w-[75px]'],
    ['Comment Viewer', 'w-[92px]'],
    ['Report Viewer', 'w-[79px]'],
  ];

  return (
    <main className="flex min-w-0 flex-1 flex-col">
      <div className="flex flex-1 flex-col border border-b-0 border-[#8c8c8c]">
        <ViewerToolbar />
        <button className="flex h-[19px] items-center gap-2 bg-[#bebebe] pl-[6px] font-bold text-[#222]">
          View 1 <Caret className="h-1 w-[6px]" />
        </button>
        <div className="relative flex-1 bg-linear-to-b from-[#678de2] to-[#fbfcff] font-['Liberation_Sans',Arial,sans-serif]">
          <Contour />
          <Legend />
          <div className="absolute right-[21px] top-[17px] text-right text-white">
            <p className="font-['Roboto',sans-serif] text-2xl font-medium leading-[28px]">ANSYS</p>
            <p className="font-['DejaVu_Sans_Condensed','DejaVu_Sans',sans-serif] text-[15px] leading-[16px]">R15.0</p>
          </div>
          <Ruler />
          <Triad />
        </div>
      </div>
      <div className="flex h-[18px]">
        {tabs.map(([name, width]) => (
          <button
            key={name}
            onClick={() => setTab(name)}
            className={`${width} ${
              tab === name
                ? 'bg-white'
                : 'border border-l-0 border-[#9a9a9a] bg-linear-to-b from-[#dadada] to-[#f2f2f2]'
            }`}
          >
            {name}
          </button>
        ))}
      </div>
    </main>
  );
}

/* ---------- taskbar ---------- */

function TaskButton({ name, className, children }) {
  return (
    <button
      aria-label={name}
      className={`flex h-full items-center justify-center rounded-xs border border-[#5f7ea3] bg-linear-to-br from-[#dfe8f5] to-[#a3bcdd] shadow-[inset_0_0_0_1px_#d5e2f2] ${className}`}
    >
      <Svg box="0 0 32 32" className="size-[29px]">{children}</Svg>
    </button>
  );
}

function Taskbar() {
  return (
    <footer className="flex h-[35px] bg-[#7b94ad]">
      <div className="flex gap-[3px] bg-[#a8c0e0] pr-px">
        <button aria-label="Start" className="flex w-[52px] items-center justify-center bg-[#7288a8] pr-1">
          <Svg box="0 0 32 32" className="size-8">
            <circle cx="16" cy="16" r="15" fill="#1f63a6" stroke="#204870" />
            <path d="M3 20c8 6 18 6 26 0-2 14-24 14-26 0z" fill="#3fb4e0" />
            <path d="M3 12C7 0 25 0 29 12c-8-5-18-5-26 0z" fill="#8eb2d4" />
            <path d="M8 9q4-2 7 0l-1 6q-4-2-7 0z" fill="#ea5a2c" />
            <path d="M17 9q4 2 8 0l-2 7q-4 1-7-1z" fill="#8cc63e" />
            <path d="M7 17q4-2 7 0l-1 6q-4-2-7 0z" fill="#4a9fe6" />
            <path d="M15 17q4 2 8 0l-2 7q-4 1-7-1z" fill="#fbd23c" />
          </Svg>
        </button>
        <TaskButton name="Explorer" className="-ml-[2px] w-[52px]">
          <path d="M2 3h8l2 3h7l2-1h6l2 3v20H2z" fill="#efd98a" stroke="#b7984a" />
          <path d="M2 10h28v18H2z" fill="#f8ebb0" />
          <path d="M6 4h4M14 5h3M22 6h4" stroke="#6b7b3c" strokeWidth="1.500" />
          <path d="M6 30V22q0-3 3-3h14q3 0 3 3v8h-4v-6H10v6z" fill="#9ccfea" stroke="#6ba8cc" />
        </TaskButton>
        <button aria-label="Media player" className="flex w-[50px] items-center justify-center">
          <Svg box="0 0 32 32" className="size-[29px]">
            <path d="M9 5l18-1v24l-18-1z" fill="#8cc2e8" stroke="#5b97c6" />
            <path d="M5 5h18v22H5z" fill="#c4dff4" stroke="#6ea5d0" />
            <circle cx="15" cy="16" r="8" fill="#f08a2a" stroke="#c2611a" />
            <path d="M12 11l8 5-8 5z" fill="#fff" />
          </Svg>
        </button>
        <TaskButton name="Chrome" className="w-[52px]">
          <path d="M16 16L4.700 9.500A13 13 0 0 1 27.300 9.500z" fill="#dd4b3a" />
          <path d="M16 16L4.700 9.500A13 13 0 0 0 16 29l5.600-10z" fill="#2ba24c" />
          <path d="M16 16l0-6.500h11.300A13 13 0 0 1 16 29l5.600-10z" fill="#fcd03f" />
          <path d="M16 3A13 13 0 0 1 27.300 9.500H16z" fill="#dd4b3a" />
          <circle cx="16" cy="16" r="6.300" fill="#fff" />
          <circle cx="16" cy="16" r="5" fill="#3f7de8" />
        </TaskButton>
        <TaskButton name="Control panel" className="w-[51px]">
          <path d="M1 5h30v18H1z" fill="#3d8bcf" stroke="#2368a4" />
          <circle cx="10" cy="12" r="4" fill="#8ec3ec" stroke="#e9c860" strokeWidth="1.500" />
          <path d="M18 9h4v3h-4zM25 9h4v3h-4zM18 16h4v3h-4zM25 16h4v3h-4zM5 19h10" stroke="#d7ecfb" strokeWidth="1.500" />
          <ellipse cx="16" cy="26" rx="6" ry="4" fill="#e8ecf2" stroke="#98a5b5" />
        </TaskButton>
        <TaskButton name="Workbench" className="w-[51px]">
          <rect x="1" y="1" width="30" height="30" rx="4" fill="#f8c21c" />
          <path d="M12 2h8l10 28h-9l-5-16-5 16H2z" fill="#1e1c18" />
          <path d="M16 14l5 16H11z" fill="#fbb40f" />
        </TaskButton>
        <TaskButton name="Recorder" className="w-[50px]">
          <path d="M4 13L19 6l9 14-15 8z" fill="#2e302c" stroke="#6b6e66" />
          <path d="M9 14l9-4 5 8-9 5z" fill="#7d8170" />
          <path d="M4 13l3-1 9 14-3 2z" fill="#b7b9b0" />
          <circle cx="23" cy="24" r="6" fill="#d8402e" stroke="#f0e0dc" />
        </TaskButton>
        <TaskButton name="DesignModeler" className="w-[47px]">
          <circle cx="16" cy="16" r="15.500" fill="#18b42a" />
          <path d="M3 12C7-1 25-1 29 12c-8-4-18-4-26 0z" fill="#5bd860" />
          <text x="16" y="22" fontSize="17" fontWeight="700" textAnchor="middle" fill="#fff">DM</text>
        </TaskButton>
        <TaskButton name="Fluent" className="ml-1 w-[51px]">
          <path d="M2 2h28v26H2z" fill="#16181a" stroke="#333" strokeWidth="2" />
          <path d="M4 8q12-5 24 0v13H4z" fill="#f4e420" />
          <path d="M4 8q5-2 9 0v6H4z" fill="#28b848" />
          <path d="M15 7q8-1 13 2v4q-6-5-13-3z" fill="#e8402a" />
          <path d="M4 17h8l7 2v3H4z" fill="#e8402a" />
          <path d="M19 14h9v6h-9z" fill="#58c83c" />
          <circle cx="11" cy="13" r="4" fill="#111" />
        </TaskButton>
        <button aria-label="CFD-Post" className="flex w-[50px] items-center justify-center rounded-xs border border-[#6c87a8] bg-linear-to-br from-[#f4f8fc] to-[#c6d5e8]">
          <EyeLogo className="size-[29px]" />
        </button>
      </div>
      <button aria-label="Volume" className="ml-5 flex items-center">
        <Svg>
          <path d="M2 6h3l4-4v12l-4-4H2z" fill="#f3f6fa" />
          <path d="M11 5q2 3 0 6M13 3q3 5 0 10" stroke="#d2dce6" />
        </Svg>
      </button>
      <button aria-label="More" className="ml-auto flex w-[11px] items-center justify-center bg-[#f2f2f2]">
        <Svg box="0 0 3 5" className="h-[5px] w-[3px]"><path d="M0 0v5L3 2.500z" fill="#222" /></Svg>
      </button>
    </footer>
  );
}

export default function App() {
  return (
    <div className="flex min-h-screen bg-black px-[74px] py-[42px] font-['DejaVu_Sans_Condensed','DejaVu_Sans',sans-serif] text-[10px] leading-3 text-[#333]">
      <div className="flex min-w-0 flex-1 flex-col bg-[#f0f0f1]">
        <TitleBar />
        <MenuBar />
        <Toolbar />
        <div className="flex flex-1 gap-2 pb-7 pl-1 pr-[5px] pt-[3px]">
          <aside className="flex w-[259px] shrink-0 flex-col gap-px">
            <Outline />
            <Details />
          </aside>
          <Viewer />
        </div>
        <Taskbar />
      </div>
    </div>
  );
}
